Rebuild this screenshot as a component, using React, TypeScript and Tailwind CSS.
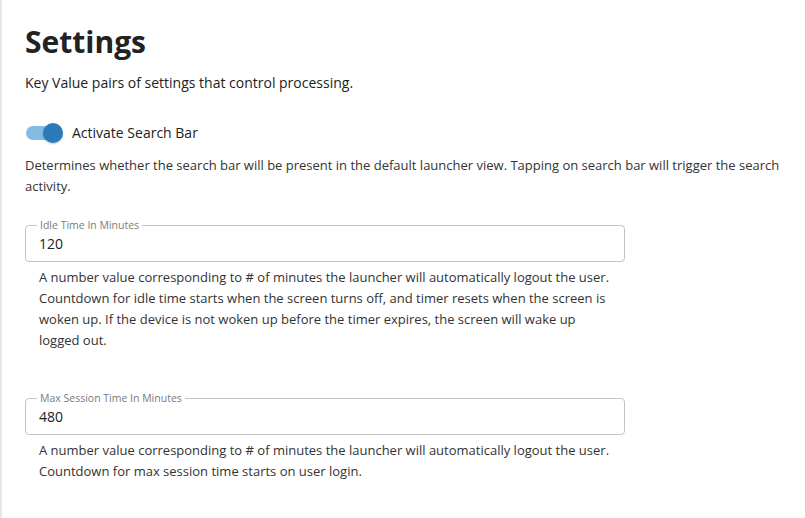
import React from 'react';

const Field: React.FC<{ label: string; value: string; help: string[] }> = ({ label, value, help }) => {
  return (
    <div>
      <fieldset className="w-[600px] h-[43px] border border-[#c4c4c4] rounded-[4px] px-[13px] pt-[3px] -mt-[6px]">
        <legend className="ml-[-2px] px-[3px] text-[10.5px] leading-[12px] text-[#7a7a7a]">{label}</legend>
        <div className="text-[14px] leading-[20px] text-[#222]">{value}</div>
      </fieldset>
      <div className="pl-[14px] pt-[5px] text-[13px] leading-[21px] text-[#333]">
        {help.map((l) => (
          <div key={l}>{l}</div>
        ))}
      </div>
    </div>
  );
};

const App: React.FC = () => {
  return (
    <div className="w-[805px] h-[518px] bg-white border-l-2 border-[#e6e6e6] font-['Open_Sans',sans-serif] overflow-hidden">
      <div className="pl-[23px] pt-[24px]">
        <h1 className="text-[30px] leading-[36px] font-bold text-[#222]">Settings</h1>
        <p className="mt-[13px] text-[14px] leading-[20px] text-[#222]">Key Value pairs of settings that control processing.</p>

        <div className="mt-[30px] flex items-center gap-[9px]">
          <div className="relative w-[38px] h-[20px] flex items-center">
            <div className="w-[32px] h-[14px] ml-[1px] rounded-full bg-[#84bbe0]" />
            <div className="absolute right-0 top-0 w-[20px] h-[20px] rounded-full bg-[#2b7bba] shadow-[0_1px_2px_rgba(0,0,0,0.25)]" />
          </div>
          <span className="text-[14px] leading-[20px] text-[#222]">Activate Search Bar</span>
        </div>

        <p className="mt-[12px] w-[770px] text-[13px] leading-[21px] text-[#333]">
          Determines whether the search bar will be present in the default launcher view. Tapping on search bar will trigger the search activity.
        </p>

        <div className="mt-[28px] flex flex-col gap-[47px]">
          <Field
            label="Idle Time In Minutes"
            value="120"
            help={[
              'A number value corresponding to # of minutes the launcher will automatically logout the user.',
              'Countdown for idle time starts when the screen turns off, and timer resets when the screen is',
              'woken up. If the device is not woken up before the timer expires, the screen will wake up',
              'logged out.',
            ]}
          />
          <Field
            label="Max Session Time In Minutes"
            value="480"
            help={[
              'A number value corresponding to # of minutes the launcher will automatically logout the user.',
              'Countdown for max session time starts on user login.',
            ]}
          />
        </div>
      </div>
    </div>
  );
};

export default App;
